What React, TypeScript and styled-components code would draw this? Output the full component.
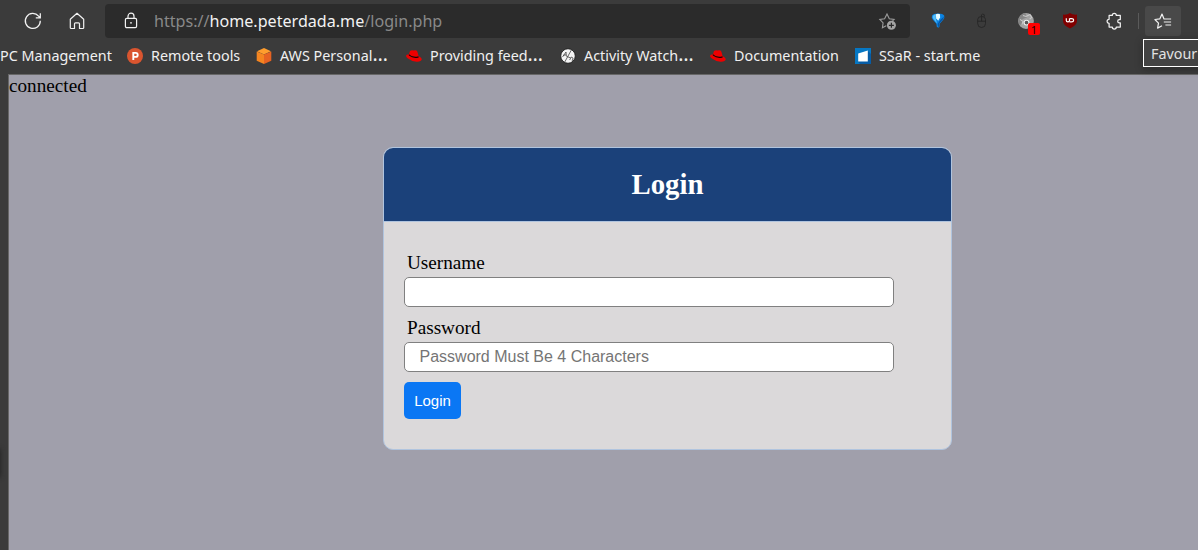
import React from 'react';
import styled, { createGlobalStyle } from 'styled-components';

const GlobalStyle = createGlobalStyle`
  * { box-sizing: border-box; }
  html, body { margin: 0; height: 550px; overflow: hidden; background: #3b3b3b; }
`;

const Browser = styled.div`
  position: relative;
  width: 1198px;
  height: 550px;
  overflow: hidden;
  display: flex;
  flex-direction: column;
  background: #3b3b3b;
  font-family: 'Noto Sans', sans-serif;
`;

const Toolbar = styled.header`
  display: flex;
  align-items: center;
  height: 42px;
  padding: 0 17px 0 24px;
`;

const Icon = styled.svg<{ $gap?: number }>`
  display: block;
  flex: none;
  margin-right: ${(p) => p.$gap ?? 0}px;
  overflow: visible;
`;

const AddressBar = styled.div`
  display: flex;
  align-items: center;
  width: 805px;
  height: 34px;
  padding: 0 13px 0 17px;
  margin-right: 19px;
  border-radius: 4px;
  background: #2b2b2b;
`;

const Url = styled.div`
  flex: 1;
  font-size: 16.13px;
  line-height: 34px;
  white-space: nowrap;
  color: #898989;
`;

const Host = styled.span`
  color: #f2f2f2;
`;

const Divider = styled.div`
  width: 1px;
  height: 16px;
  margin: 0 6px 0 15px;
  background: #5a5a5a;
`;

const ActiveTool = styled.div`
  display: flex;
  align-items: center;
  justify-content: center;
  width: 36px;
  height: 30px;
  border-radius: 3px;
  background: #494949;
`;

const Extension = styled.div<{ $gap: number }>`
  position: relative;
  width: 18px;
  height: 18px;
  margin-right: ${(p) => p.$gap}px;
`;

const Count = styled.span`
  position: absolute;
  left: 11px;
  top: 11px;
  width: 12px;
  height: 12px;
  border-radius: 2px;
  background: #ff0000;
  color: #1c0000;
  font-size: 11px;
  line-height: 13px;
  text-align: center;
`;

const Bookmarks = styled.nav`
  display: flex;
  align-items: center;
  height: 32px;
  padding-bottom: 4px;
`;

const Bookmark = styled.div<{ $width: number }>`
  display: flex;
  align-items: center;
  flex: none;
  gap: 7px;
  width: ${(p) => p.$width}px;
  font-size: 14.35px;
  line-height: 20px;
  white-space: nowrap;
  color: #f0f0f0;
`;

const Title = styled.span`
  height: 20px;
`;

const Ellipsis = styled.span`
  font-size: 19.5px;
  line-height: 0;
`;

const Tooltip = styled.div`
  position: absolute;
  left: 1143px;
  top: 39px;
  width: 80px;
  height: 28px;
  padding-left: 7px;
  border: 1px solid #ffffff;
  background: #434343;
  box-shadow: 0 2px 8px rgba(0, 0, 0, 0.3);
  color: #e2e2e2;
  font-size: 14.35px;
  line-height: 27px;
`;

const Page = styled.main`
  flex: 1;
  margin-left: 8px;
  border: solid #676767;
  border-width: 1px 0 0 1px;
  background: #a09fab;
  color: #000;
  font-family: 'Liberation Serif', serif;
  font-size: 19.2px;
  line-height: 22px;
`;

const Card = styled.section`
  width: 569px;
  height: 303px;
  margin: 50px 0 0 374px;
  overflow: hidden;
  border: 1px solid #b0c4de;
  border-radius: 10px;
  background: #dbd9da;
`;

const CardHeader = styled.h2`
  height: 74px;
  margin: 0;
  border-bottom: 1px solid #b0c4de;
  background: #1b417a;
  color: #fff;
  font-size: 28.8px;
  line-height: 73px;
  text-align: center;
`;

const Form = styled.form`
  display: flex;
  flex-direction: column;
  align-items: flex-start;
  padding: 30px 20px;
`;

const Field = styled.div`
  display: flex;
  flex-direction: column;
  height: 55px;
  margin-bottom: 10px;
`;

const Label = styled.label`
  height: 25px;
  padding-left: 3px;
`;

const Input = styled.input`
  width: 490px;
  height: 30px;
  margin: 0;
  padding: 0 14.5px;
  border: 1px solid gray;
  border-radius: 5px;
  background: #fff;
  font-family: 'Liberation Sans', sans-serif;
  font-size: 16px;
  outline: none;
  &::placeholder { color: #757575; }
`;

const Submit = styled.button`
  width: 57px;
  height: 37px;
  padding: 0;
  border: none;
  border-radius: 5px;
  background: #0a77f4;
  color: #fff;
  font-family: 'Liberation Sans', sans-serif;
  font-size: 15px;
`;

const EdgeShadow = styled.div`
  position: absolute;
  left: -7px;
  top: 450px;
  width: 6px;
  height: 26px;
  box-shadow: 0 0 5px 1px #202020;
`;

const RedHat = () => (
  <Icon width="17" height="16" viewBox="0 0 17 16">
    <path d="M2.9 6.6 4 3.1Q5.8 1.6 7.5 2.5 10.4 1.5 11.3 3.6L12.6 7.9Q15.9 9.6 15.8 11.3 15.1 14 10.6 13.7 5.2 13.2 1.2 10-.4 8.4.3 7.1 1.2 6.2 2.9 6.6Z" fill="#ee0000" />
    <path d="M3 6.2Q7 10.1 12.5 8.3L12.7 9.4Q7.5 11.2 2.8 7.5Z" fill="#160606" />
  </Icon>
);

export default function App() {
  return (
    <Browser>
      <GlobalStyle />
      <Toolbar>
        <Icon width="18" height="18" viewBox="0 0 18 18" $gap={26} fill="none" stroke="#f2f2f2" strokeWidth="1.25">
          <path d="M16.3 8.8A7.5 7.5 0 1 1 14.6 4.2L16 5.8M16.3 1.3V5.8H11.8" />
        </Icon>
        <Icon width="18" height="18" viewBox="0 0 18 18" $gap={19} fill="none" stroke="#f2f2f2" strokeWidth="1.2" strokeLinejoin="round">
          <path d="M2.3 7.2 9 1.3l6.7 5.9v8.5q0 .8-.8.8h-3.4v-4.7q0-1-1-1h-3q-1 0-1 1v4.7H3.1q-.8 0-.8-.8Z" />
        </Icon>
        <AddressBar>
          <Icon width="18" height="18" viewBox="0 0 18 18" $gap={14} fill="none" stroke="#f2f2f2" strokeWidth="1.2">
            <rect x="3.4" y="6.4" width="11.2" height="9.2" rx="1.3" />
            <path d="M6 6.4V4.2a3 3 0 0 1 6 0v2.2" />
            <circle cx="9" cy="10.8" r=".9" fill="#f2f2f2" stroke="none" />
          </Icon>
          <Url>https://<Host>home.peterdada.me</Host>/login.php</Url>
          <Icon width="18" height="18" viewBox="0 0 18 18" fill="none" stroke="#9c9c9c" strokeWidth="1.1">
            <path d="M7.2 13.8 3.4 15.8 4.1 10.9.8 7.4l4.8-.7L8 2 10.3 6.7l4.8.7-1.6 1.5" />
            <circle cx="12.4" cy="13.3" r="4.5" fill="#a4a4a4" stroke="none" />
            <path d="M12.4 10.8v5M9.9 13.3h5" stroke="#2b2b2b" strokeWidth="1.2" />
          </Icon>
        </AddressBar>
        <Icon width="18" height="18" viewBox="0 0 18 18" $gap={26}>
          <path d="M3 3.6Q4.2 1.6 9 1.5t6.2 2.1q.7 2.2-1 4.1l-3.5 4-.3 3-1.2 1-1.4-1-.4-2.9-3.5-4.1Q2.2 5.8 3 3.6Z" fill="#0b83e2" />
          <path d="M3.8 4Q5 2.4 6.8 2.2v4.4L8 11.4 4.7 7.5Q3.2 5.7 3.8 4Z" fill="#54bdf8" />
          <path d="M6.8 2.2Q9 1.4 11 2.2l.1 3.2-1.9 3.4-2-2.4Z" fill="#e6fbff" />
          <path d="M14.8 4.8q.2 1.3-1 2.8l-3.4 3.8-.2 2.9-1.1.7-.5-3 2.6-4Z" fill="#0757a6" />
        </Icon>
        <Icon width="18" height="18" viewBox="0 0 18 18" $gap={26} fill="none" stroke="#252525" strokeWidth=".9">
          <path d="M4.7 7.5q0-3 3.9-3t3.9 3v4q0 4-3.9 4t-3.9-4ZM4.7 9.2h7.8M8.6 4.5v4.7M8.6 4.5Q7.6 2.5 9.8 2q2.4.1 1.3 2.9" />
        </Icon>
        <Extension $gap={26}>
          <Icon width="18" height="18" viewBox="0 0 18 18">
            <circle cx="9" cy="9" r="7.9" fill="#a2a2a2" />
            <path d="M1.2 9A7.8 7.8 0 0 1 8.2 1.3l2 4-5 2 .8 4-3.4 2Z" fill="#858585" />
            <path d="m6 3.4 3 1 4-2 1.7 3-2 1.8M3 7.4l3 2-1 3" stroke="#c9c9c9" strokeWidth="1.1" fill="none" />
            <circle cx="9.5" cy="10.6" r="2.4" fill="#565656" stroke="#ededed" strokeWidth="1.1" />
          </Icon>
          <Count>1</Count>
        </Extension>
        <Icon width="18" height="18" viewBox="0 0 18 18" $gap={26}>
          <path d="M9 1q2.6 2 7 1.6v6.2Q16 13.4 9 16.6 2 13.4 2 8.8V2.6Q6.4 3 9 1Z" fill="#800000" />
          <path d="M5.3 6.2v2.2q0 1.4 1.6 1.4t1.6-1.4V6.2" fill="none" stroke="#fff" strokeWidth="1.2" />
          <path d="M8.5 9.8h2.1q2 0 2-1.6t-2-1.6H8.9" fill="none" stroke="#fff" strokeWidth="1.2" />
        </Icon>
        <Icon width="18" height="18" viewBox="0 0 18 18" fill="none" stroke="#f2f2f2" strokeWidth="1.25" strokeLinejoin="round">
          <path d="M4.1 3.4h3.2a2 2 0 0 1 4 0h4v4.2h-1a1.6 1.6 0 0 0 0 3.2h1V15h-4a2 2 0 0 1-4 0H4.1v-3.7a2 2 0 0 1 0-4Z" />
        </Icon>
        <Divider />
        <ActiveTool>
          <Icon width="18" height="18" viewBox="0 0 18 18" fill="none" stroke="#f2f2f2" strokeWidth="1.2" strokeLinejoin="round">
            <path d="M10.8 7H10L8 2.1 5.9 6.8.9 7.5l3.6 3.6-.9 5 4.4-2.3M10.5 7h6.6M9.8 10h7.3M11.4 13h5.7" />
          </Icon>
        </ActiveTool>
      </Toolbar>
      <Bookmarks>
        <Bookmark $width={127}>PC Management</Bookmark>
        <Bookmark $width={129}>
          <Icon width="17" height="16" viewBox="0 0 17 16">
            <circle cx="8" cy="8" r="8" fill="#da552f" />
            <path d="M6.3 12V4.9h2.4a2 2 0 0 1 0 4H6.3" fill="none" stroke="#fff" strokeWidth="1.9" />
          </Icon>
          Remote tools
        </Bookmark>
        <Bookmark $width={150}>
          <Icon width="17" height="16" viewBox="0 0 17 16">
            <path d="m8 0 7 3.3-7 3.2-7-3.2Z" fill="#ff9d2d" />
            <path d="M.7 3.4 8 6.5V16L.7 12.7Z" fill="#f58520" />
            <path d="m15.3 3.4-7.3 3.1V16l7.3-3.3Z" fill="#e76322" />
          </Icon>
          <Title>AWS Personal<Ellipsis>…</Ellipsis></Title>
        </Bookmark>
        <Bookmark $width={154}>
          <RedHat />
          <Title>Providing feed<Ellipsis>…</Ellipsis></Title>
        </Bookmark>
        <Bookmark $width={150}>
          <Icon width="17" height="16" viewBox="0 0 17 16">
            <circle cx="8" cy="8" r="7.3" fill="#f4f4f4" stroke="#222" />
            <path d="m11.3 2.1-6.6 12M2.5 9 6 4l.3 4M3 7.4l3.1-.6M6.3 8.2l4 1.6M9.7 12l1.4-3 2 1.1-1 3" fill="none" stroke="#444" strokeWidth=".8" />
          </Icon>
          <Title>Activity Watch<Ellipsis>…</Ellipsis></Title>
        </Bookmark>
        <Bookmark $width={145}>
          <RedHat />
          Documentation
        </Bookmark>
        <Bookmark $width={140}>
          <Icon width="17" height="16" viewBox="0 0 17 16">
            <path d="M0 0h16v16H0Z" fill="#0677c3" />
            <path d="m13 3 3 3v10H5l-2-2.5Z" fill="#075ca5" />
            <path d="M3.2 5.4 12.8 2.4v11.1H3.2Z" fill="#fff" />
          </Icon>
          SSaR - start.me
        </Bookmark>
      </Bookmarks>
      <Page>
        connected
        <Card>
          <CardHeader>Login</CardHeader>
          <Form>
            <Field>
              <Label htmlFor="username">Username</Label>
              <Input id="username" type="text" />
            </Field>
            <Field>
              <Label htmlFor="password">Password</Label>
              <Input id="password" type="password" placeholder="Password Must Be 4 Characters" />
            </Field>
            <Submit type="button">Login</Submit>
          </Form>
        </Card>
      </Page>
      <Tooltip>Favour</Tooltip>
      <EdgeShadow />
    </Browser>
  );
}
